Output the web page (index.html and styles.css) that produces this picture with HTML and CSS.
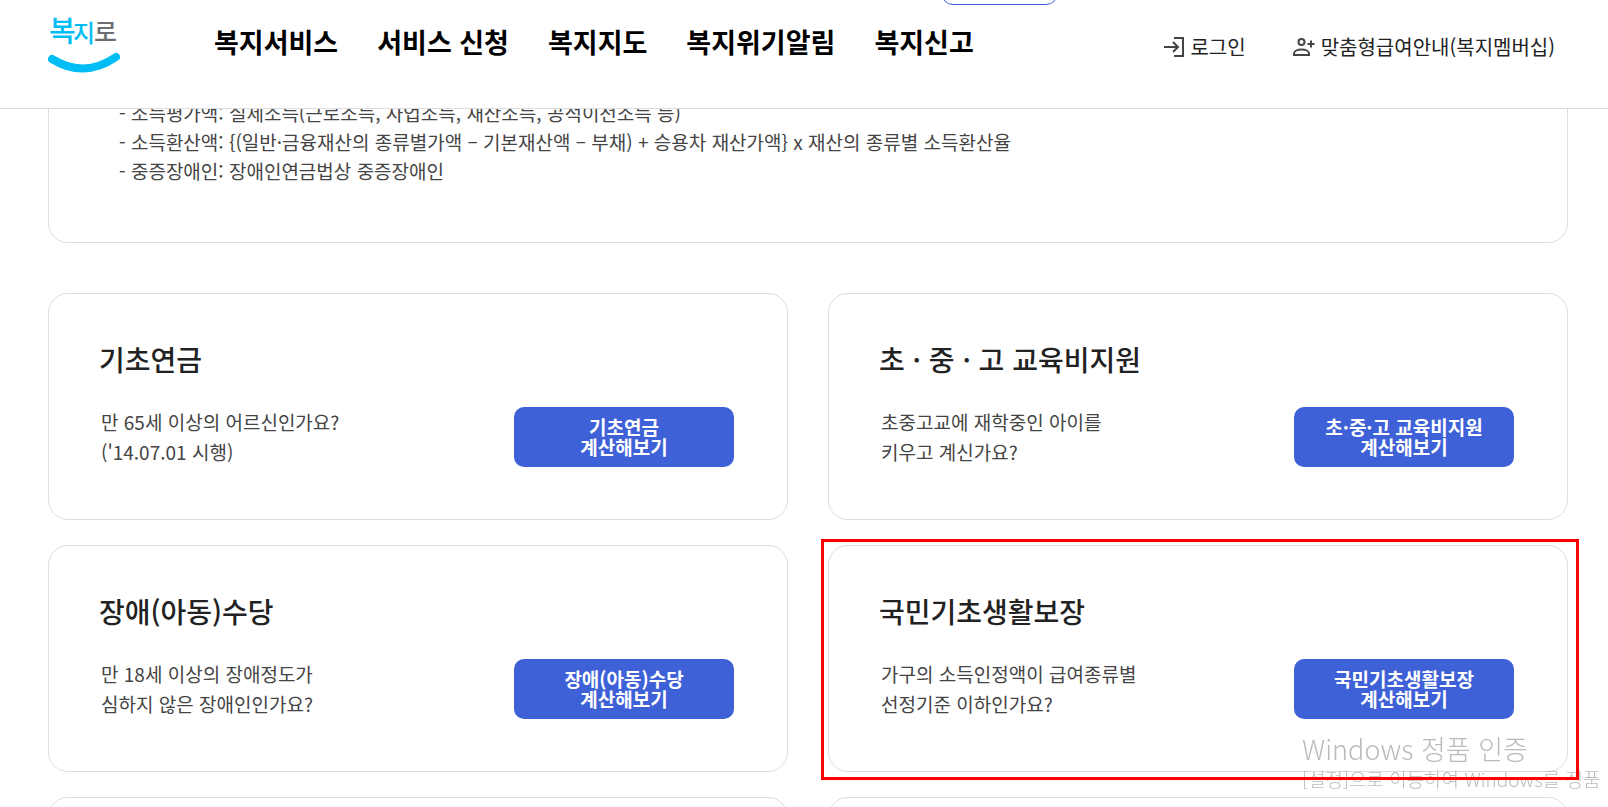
FILE: index.html
```html
<!DOCTYPE html>
<html lang="ko">

<head>
    <meta charset="UTF-8">
    <meta name="viewport" content="width=device-width, initial-scale=1.0">
    <title>복지로</title>
    <link rel="stylesheet" href="styles.css">
</head>

<body>
    <header class="header">
        <div class="topPill"></div>
        <a href="#" class="logo" aria-label="복지로">
            <svg width="72" height="66" viewBox="0 0 72 66">
                <text class="logoBlue" x="1" y="34" font-size="29">복</text>
                <text class="logoBlue" x="25" y="34" font-size="24">지</text>
                <text class="logoGray" x="46" y="33" font-size="25">로</text>
                <path d="M4 51Q36 71 68 49" fill="none" stroke="#00bef5" stroke-width="8" stroke-linecap="round" />
            </svg>
        </a>
        <nav class="menu">
            <a href="#">복지서비스</a>
            <a href="#">서비스 신청</a>
            <a href="#">복지지도</a>
            <a href="#">복지위기알림</a>
            <a href="#">복지신고</a>
        </nav>
        <div class="util">
            <a href="#">
                <svg width="22" height="22" viewBox="0 0 22 22" fill="none" stroke="#444" stroke-width="2">
                    <path d="M11 2H20V20H11" />
                    <path d="M1 11H15M10 6L15 11L10 16" />
                </svg>
                로그인
            </a>
            <a href="#">
                <svg width="24" height="22" viewBox="0 0 24 22" fill="none" stroke="#444" stroke-width="2">
                    <circle cx="9.500" cy="6" r="3" />
                    <path d="M2 19V17.500C2 15 5.500 13.500 9.500 13.500S17 15 17 17.500V19Z" />
                    <path d="M19 4.500V11.500M15.500 8H22.500" />
                </svg>
                맞춤형급여안내(복지멤버십)
            </a>
        </div>
    </header>

    <main>
        <section class="notice">
            <p>- 소득평가액: 실제소득(근로소득, 사업소득, 재산소득, 공적이전소득 등)</p>
            <p>- 소득환산액: {(일반·금융재산의 종류별가액 – 기본재산액 – 부채) + 승용차 재산가액} x 재산의 종류별 소득환산율</p>
            <p>- 중증장애인: 장애인연금법상 중증장애인</p>
        </section>

        <div class="cards">
            <section class="card">
                <h2>기초연금</h2>
                <div class="cardBody">
                    <p>만 65세 이상의 어르신인가요?<br>('14.07.01 시행)</p>
                    <button type="button">기초연금<br>계산해보기</button>
                </div>
            </section>
            <section class="card">
                <h2>초 · 중 · 고 교육비지원</h2>
                <div class="cardBody">
                    <p>초중고교에 재학중인 아이를<br>키우고 계신가요?</p>
                    <button type="button">초·중·고 교육비지원<br>계산해보기</button>
                </div>
            </section>
            <section class="card">
                <h2>장애(아동)수당</h2>
                <div class="cardBody">
                    <p>만 18세 이상의 장애정도가<br>심하지 않은 장애인인가요?</p>
                    <button type="button">장애(아동)수당<br>계산해보기</button>
                </div>
            </section>
            <section class="card marked">
                <h2>국민기초생활보장</h2>
                <div class="cardBody">
                    <p>가구의 소득인정액이 급여종류별<br>선정기준 이하인가요?</p>
                    <button type="button">국민기초생활보장<br>계산해보기</button>
                </div>
            </section>
            <section class="card"></section>
            <section class="card"></section>
        </div>
    </main>

    <div class="watermark">
        <p class="watermarkTitle">Windows 정품 인증</p>
        <p>[설정]으로 이동하여 Windows를 정품</p>
    </div>
</body>

</html>
```

FILE: styles.css
```css
* {
    box-sizing: border-box;
}

body {
    margin: 0;
    height: 100vh;
    overflow: hidden;
    background: #fff;
    color: #222;
    font-family: "Noto Sans CJK KR", sans-serif;
}

a {
    color: inherit;
    text-decoration: none;
}

h2,
p {
    margin: 0;
}

.header {
    position: fixed;
    top: 0;
    left: 0;
    right: 0;
    z-index: 10;
    display: flex;
    align-items: flex-start;
    height: 109px;
    padding: 8px 53px 0 48px;
    background: #fff;
    border-bottom: 1px solid #ddd;
}

.topPill {
    position: absolute;
    top: -31px;
    left: 941px;
    width: 117px;
    height: 36px;
    border: 1px solid #3e61d7;
    border-radius: 12px;
}

.logo svg {
    display: block;
    font-weight: 500;
}

.logoBlue {
    fill: #00bef5;
}

.logoGray {
    fill: #6d6e71;
}

.menu {
    display: flex;
    gap: 39px;
    margin-left: 94px;
    padding-top: 14px;
    color: #000;
    font-size: 27px;
    font-weight: bold;
    line-height: 40px;
}

.util {
    display: flex;
    gap: 46px;
    margin-left: auto;
    padding-top: 24px;
    font-size: 20px;
    line-height: 30px;
}

.util a {
    display: flex;
    align-items: center;
    gap: 5px;
}

main {
    padding: 0 40px 0 48px;
}

.notice {
    padding: 97px 70px 57px;
    border: 1px solid #ddd;
    border-radius: 20px;
    color: #444;
    font-size: 19px;
    line-height: 29px;
}

.cards {
    display: grid;
    grid-template-columns: 1fr 1fr;
    gap: 25px 40px;
    margin-top: 50px;
}

.card {
    position: relative;
    min-height: 227px;
    padding: 45px 53px 0 50px;
    border: 1px solid #ddd;
    border-radius: 20px;
}

.card h2 {
    font-size: 28px;
    font-weight: 500;
    line-height: 40px;
}

.cardBody {
    display: flex;
    justify-content: space-between;
    align-items: center;
    margin-top: 28px;
    padding-left: 2px;
}

.cardBody p {
    color: #444;
    font-size: 19px;
    line-height: 30px;
}

.cardBody button {
    width: 220px;
    height: 60px;
    padding: 0;
    border: none;
    border-radius: 10px;
    background: #3e61d7;
    color: #fff;
    font-family: inherit;
    font-size: 19px;
    font-weight: bold;
    line-height: 20px;
    cursor: pointer;
}

/* red frame drawn round the highlighted card */
.marked::after {
    content: "";
    position: absolute;
    z-index: 5;
    top: -7px;
    right: -12px;
    bottom: -9px;
    left: -8px;
    border: 3px solid #f00;
}

.watermark {
    position: fixed;
    right: 6px;
    bottom: 14px;
    z-index: 2;
    width: 300px;
    color: #bbb;
    font-size: 19px;
    font-weight: 300;
    line-height: 28px;
    white-space: nowrap;
    pointer-events: none;
}

.watermarkTitle {
    font-size: 27px;
    line-height: 32px;
}
```
